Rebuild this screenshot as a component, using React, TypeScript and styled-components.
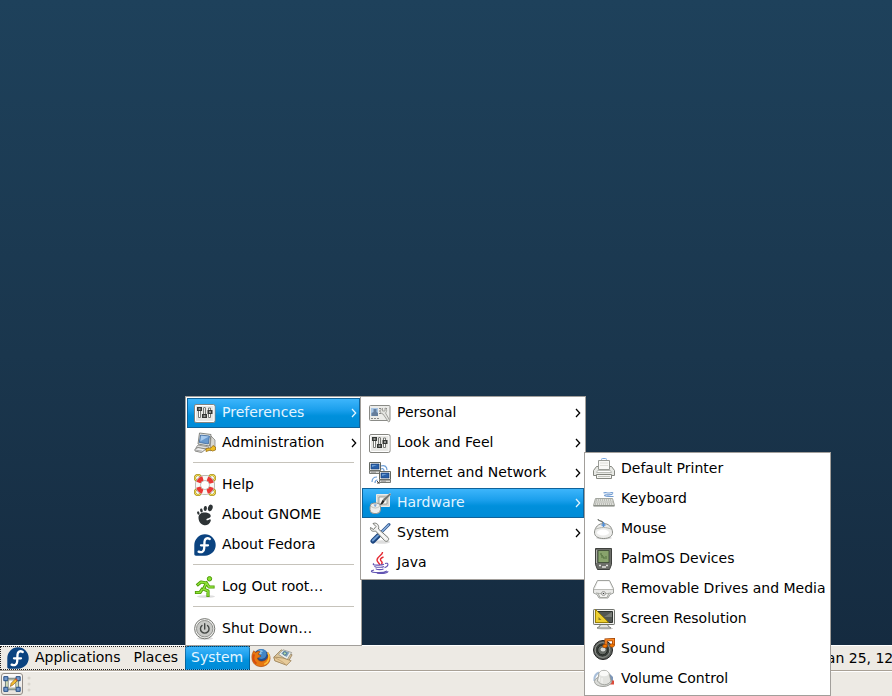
import React from "react";
import styled, { createGlobalStyle, css } from "styled-components";

const GlobalStyle = createGlobalStyle`
  * { box-sizing: border-box; }
  html, body, #root { height: 100%; margin: 0; }
  body { overflow: hidden; font: 14px/20px "DejaVu Sans", sans-serif; color: #000; }
  button { font: inherit; color: inherit; border: 0; margin: 0; padding: 0; background: none; text-align: left; }
  svg { display: block; flex: none; }
`;

const Screen = styled.div`
  position: relative;
  display: flex;
  flex-direction: column;
  height: 100%;
  overflow: hidden;
`;

const Wallpaper = styled.main`
  flex: 1;
  background: linear-gradient(#1e415b, #1a364d 55%, #152b40);
`;

const Panel = styled.div`
  display: flex;
  align-items: center;
  height: 26px;
  background: #edeae4;
  border-top: 1px solid #fff;
  border-bottom: 1px solid #a9a196;
  white-space: nowrap;
`;

const TaskPanel = styled(Panel)`
  height: 25px;
  border-bottom: 0;
  padding-left: 1px;
  gap: 4px;
`;

const MenuBar = styled.nav`
  display: flex;
  align-items: stretch;
  height: 24px;
  border: 1px dotted #222;
  border-right: 0;
`;

const blueFill = css`
  background: linear-gradient(#3db5fb, #1a9fec 40%, #0090dc 60%, #008bd7);
  color: #e2f5ff;
`;

const BarButton = styled.button<{ $active?: boolean }>`
  display: flex;
  align-items: center;
  gap: 6px;
  padding: 0 7px 0 6px;
  ${(p) =>
    p.$active &&
    css`
      ${blueFill}
      margin: -1px 0;
      border: 1px dotted #0b3c60;
      border-radius: 3px 3px 0 0;
      padding: 0 6px 0 5px;
    `}
`;

const BarLabel = styled.span`
  padding-bottom: 2px;
`;

const Launchers = styled.div`
  display: flex;
  gap: 2px;
  padding-left: 1px;
`;

const LaunchButton = styled.button`
  display: flex;
`;

const Clock = styled.time`
  margin-left: auto;
  margin-right: -6px;
`;

const DesktopButton = styled.button`
  display: flex;
  align-items: center;
  justify-content: center;
  width: 22px;
  height: 22px;
  border: 1px solid #928c86;
  border-radius: 3px;
  background: linear-gradient(#fbfaf9, #e6e2dc);
`;

const Menu = styled.div<{ $left: number; $bottom: number; $width: number }>`
  position: absolute;
  left: ${(p) => p.$left}px;
  bottom: ${(p) => p.$bottom}px;
  width: ${(p) => p.$width}px;
  padding: 1px;
  background: #fff;
  border: 1px solid #a29f9b;
`;

const MenuItem = styled.button<{ $active?: boolean }>`
  display: flex;
  align-items: center;
  gap: 6px;
  width: 100%;
  height: 30px;
  padding: 0 3px 0 7px;
  white-space: nowrap;
  ${(p) =>
    p.$active &&
    css`
      ${blueFill}
      border: 1px solid #0f639b;
      padding: 0 2px 0 6px;
    `}
`;

const ItemLabel = styled.span`
  flex: 1;
  padding-bottom: 2px;
`;

const Separator = styled.hr`
  height: 1px;
  margin: 4px 6px 7px;
  border: 0;
  background: #c6c3bb;
`;

const Svg = ({ children, size = 22 }: { children: React.ReactNode; size?: number }) => (
  <svg width={size} height={size} viewBox="0 0 22 22" fill="none" aria-hidden="true">
    {children}
  </svg>
);

const Chevron = () => (
  <svg width="6" height="10" viewBox="0 0 6 10" fill="none" stroke="currentColor" strokeWidth="1.250" aria-hidden="true">
    <path d="M1 1 L4.700 5 L1 9" />
  </svg>
);

const SlidersIcon = () => (
  <Svg>
    <rect x=".5" y="2.500" width="20.500" height="18" rx="1.500" fill="#e8e8e5" stroke="#858580" />
    <rect x="1.500" y="3.500" width="18.500" height="16" rx="1" stroke="#fff" />
    <path d="M4.500 7v8.500h2V7M9.500 6v6M11.500 6v6M14.500 10v5.500h2V10M9.500 5.500h2M14.500 8V6h2v2" fill="#fff" stroke="#6b6d69" strokeWidth=".9" />
    <path d="M3 5h5v4H3zM8 12h5v4H8zM13.500 8h5v4h-5z" fill="#343735" />
    <path d="M4.500 7h2M9.500 14h2M15 10h2" stroke="#f3f3ef" />
  </Svg>
);

const AdminIcon = () => (
  <Svg>
    <path d="M17 4l4 4v8l-5 3z" fill="#d8d8d2" stroke="#777" strokeWidth=".7" />
    <path d="M5.500 1L17 2.500 15.500 14 4 12z" fill="#eeeeea" stroke="#777974" strokeWidth=".9" />
    <path d="M6.500 3l9 1-1.200 8L5.300 10.500z" fill="#6899cf" stroke="#315b91" strokeWidth=".7" />
    <path d="M7 3.800l7.800.8-8.400 4.600z" fill="#a6c9ed" />
    <path d="M4 13l11 2-2 2.500L2 15.500z" fill="#dededb" stroke="#777" strokeWidth=".7" />
    <path d="M1 17l3-1.500 8 1.500-4.500 3.500L1 19z" fill="#eee" stroke="#8a8a86" />
    <path d="M2 18.200l6 1" stroke="#aaa" />
    <path d="M12 16.500l5-.5 2-2.500 2.500 1.500v3l-3 1-2-1-4.500 1.500z" fill="#efbd24" stroke="#9a7010" strokeWidth=".8" />
  </Svg>
);

const HelpIcon = () => (
  <Svg>
    <g stroke="#a08613" strokeWidth="2">
      <circle cx="4" cy="4" r="3" /><circle cx="18" cy="4" r="3" />
      <circle cx="4" cy="18" r="3" /><circle cx="18" cy="18" r="3" />
    </g>
    <g stroke="#f5df55">
      <circle cx="4" cy="4" r="3" /><circle cx="18" cy="4" r="3" />
      <circle cx="4" cy="18" r="3" /><circle cx="18" cy="18" r="3" />
    </g>
    <circle cx="11" cy="11" r="7" stroke="#858782" strokeWidth="6" />
    <circle cx="11" cy="11" r="7" stroke="#f7f7f4" strokeWidth="5" />
    <circle cx="11" cy="11" r="7" stroke="#ea3834" strokeWidth="4.400" strokeDasharray="6.400 4.595" strokeDashoffset="-2.300" />
  </Svg>
);

const GnomeIcon = () => (
  <Svg>
    <g fill="#2e3436">
      <ellipse cx="16.300" cy="3.900" rx="2.300" ry="3.400" transform="rotate(18 16.300 3.900)" />
      <ellipse cx="11.300" cy="4.500" rx="1.600" ry="2.400" transform="rotate(8 11.300 4.500)" />
      <ellipse cx="7.400" cy="6.500" rx="1.300" ry="2" transform="rotate(-12 7.400 6.500)" />
      <ellipse cx="4.300" cy="9" rx="1.100" ry="1.700" transform="rotate(-24 4.300 9)" />
      <path d="M10.500 8.500c4 0 6.500 1.700 6.200 3.700-.4 2.500-4.300 1.700-4.300 3.500 0 1.300 2.100.4 3-.2 1-.6 1.700.2 1.300 1.600-1 3.300-4.300 4.900-7.200 4C6 20 4.500 16.500 4.500 13.500c0-3 2.500-5 6-5z" />
    </g>
  </Svg>
);

const FedoraIcon = () => (
  <Svg>
    <path d="M11 .3A10.700 10.700 0 0 0 .3 11v9c0 1.200.6 1.700 1.700 1.700h9A10.700 10.700 0 1 0 11 .3z" fill="#0b4380" />
    <path d="M15.800 5c-2.800-1.700-5.100-.2-5.300 2.700l-.3 6.700c-.2 3.300-2.500 4.600-5.600 3.200M7 11.300h7" stroke="#fff" strokeWidth="2.300" strokeLinecap="round" />
  </Svg>
);

const RunnerIcon = () => (
  <Svg>
    <ellipse cx="12" cy="20.500" rx="9" ry="1.300" fill="#ddd" />
    <g strokeLinecap="square" strokeLinejoin="round">
      <path d="M4 8.500l3-2.500 5.500 1-3 6 4.500 2v4.500M8 13.500l-2 3H2.500M12.500 7l2.500 4h4" stroke="#4e9a06" strokeWidth="3.200" />
      <path d="M4 8.500l3-2.500 5.500 1-3 6 4.500 2v4.500M8 13.500l-2 3H2.500M12.500 7l2.500 4h4" stroke="#8ee23a" strokeWidth="1.500" />
    </g>
    <circle cx="15.500" cy="2.800" r="2.200" fill="#8ae234" stroke="#4e9a06" />
  </Svg>
);

const PowerIcon = () => (
  <Svg>
    <ellipse cx="11" cy="20.500" rx="8" ry="1.300" fill="#ddd" />
    <circle cx="10.700" cy="10.700" r="10.100" fill="#f1f1ef" stroke="#777974" />
    <circle cx="10.700" cy="10.700" r="8.200" fill="#c9cac7" stroke="#91928e" />
    <path d="M8 7.500a4.300 4.300 0 1 0 5.500 0M10.700 5.800v5.200" stroke="#444845" strokeWidth="1.400" strokeLinecap="round" />
  </Svg>
);

const PersonalIcon = () => (
  <Svg>
    <rect x=".5" y="3.500" width="20.500" height="15" rx="1" fill="#ecece9" stroke="#8a8b87" />
    <path d="M2 6h7v8H2z" fill="#a7c5e5" />
    <path d="M2.500 14v-3l2-1V7h3v3l1.500 1v3z" fill="#667e9c" />
    <path d="M10 6.500h4M16 6.500h3M10 9h3M2 16.500h5M8 16.500h3M10 11.500h4" stroke="#888" strokeDasharray="2 1" />
    <path d="M13.500 6.500c-3 1-3 5 .5 5.500l5.500 8 1.500-1-4.500-8c2-2 1-4.500-.5-5v3h-2.500z" fill="#e4e4e1" stroke="#a0a19c" />
  </Svg>
);

const Computer = () => (
  <>
    <path d="M.5.5h11v8H.5z" fill="#eeeeea" stroke="#656862" />
    <path d="M2 2h8v5H2z" fill="#2960a8" stroke="#163c78" strokeWidth=".6" />
    <path d="M3 3h5L3 5z" fill="#6c9dd3" />
    <path d="M.5 9h11v2.500H.5z" fill="#ddddda" stroke="#767974" />
    <path d="M2 10.200h5" stroke="#777" strokeWidth=".7" />
  </>
);

const NetworkIcon = () => (
  <Svg>
    <path d="M12 4c3-1 6 0 6 4M12 7c2-1 3 0 3 2M3 20c0-3 2-5 5-5M6 21c0-2 1-3 2.500-3" stroke="#6c9dd5" strokeWidth="1.200" />
    <path d="M8 19l2 2M8 21h3" stroke="#444" />
    <Computer />
    <g transform="translate(10 9)"><Computer /></g>
  </Svg>
);

const HardwareIcon = () => (
  <Svg>
    <path d="M7.500 2.500h13v12h-13z" fill="#d3d4d0" stroke="#ecece8" />
    <path d="M10 5h8v7h-8z" fill="#f7f7f4" stroke="#82857f" strokeWidth=".7" />
    <path d="M13 11l1-4 7-6 1 1.500L16 9z" fill="#6d706b" stroke="#ddd" strokeWidth=".5" />
    <path d="M11 13l2.500-5 2 1.500-2 2.500z" fill="#222" />
    <rect x="1" y="11" width="10.500" height="10.500" rx="4" fill="#ededeb" stroke="#92948f" />
    <path d="M2 14.500c3 2 6 2 8.500 0M6.200 11v4" stroke="#b5b7b2" strokeWidth=".8" />
    <path d="M4.500 12.500h3.500L6.200 15z" fill="#77a8df" />
  </Svg>
);

const ToolsIcon = () => (
  <Svg>
    <ellipse cx="13" cy="20" rx="8" ry="1.700" fill="#ddd" />
    <path d="M20 2.500L11.500 11" stroke="#345b91" strokeWidth="3" strokeLinecap="round" />
    <path d="M20 2.500L11.500 11" stroke="#90b5e2" strokeWidth="1.300" />
    <path d="M9.500 13.500L4 19" stroke="#1b447e" strokeWidth="5" strokeLinecap="round" />
    <path d="M9 13.500L3.800 18.500" stroke="#6d9bd0" strokeWidth="2" strokeLinecap="round" />
    <path d="M4 1.500l3 3-2.500 3-3-2C1 8.500 3.500 10 6.500 9l9 9.500c2.500 2.500 5.500-1 3.500-3L9.500 7c1-3.500-1.500-7-5.500-5.500z" fill="#f1f1ef" stroke="#777974" />
    <path d="M8 8l9 9" stroke="#fff" />
  </Svg>
);

const JavaIcon = () => (
  <Svg>
    <path d="M13.500 0c.5 3-5.500 4.500-5.500 8 0 2 2.500 3 3 5M14.500 5c-3 1-4 2.500-2 4.500 1 1 .7 2-.2 3" stroke="#e52831" strokeWidth="1.400" />
    <path d="M5 11.500c-4 2 8 2 10 .8M6 14c-1.500 1.800 8 1.600 9 .3M7 16.500c0 1.600 6.500 1.400 7.500.3M16 11.500c4-1.500 4 3-.5 4.200M5 18c-9 2.300 8 4 13 1M8 21.300c6 .6 11-.5 11-2" stroke="#6254b3" strokeWidth="1.100" />
  </Svg>
);

const PrinterIcon = () => (
  <Svg>
    <path d="M8 1.500c1-1.500 5-1.500 6 0" stroke="#78a7df" />
    <path d="M3.500 8.500h15l3 4v5H.5v-5z" fill="#e8e9e5" stroke="#858780" />
    <path d="M5.500 2.500h11v9h-11z" fill="#f8f8f6" stroke="#999b96" />
    <path d="M7 5h8M7 7.500h8" stroke="#deded9" />
    <path d="M4.500 12.500h13l1 2h-15z" fill="#fff" stroke="#bbbdb7" />
    <path d="M3.500 16.500h15v4h-15z" fill="#f5f5f2" stroke="#858780" />
    <path d="M5 18.500h12" stroke="#c3c5be" />
  </Svg>
);

const KeyboardIcon = () => (
  <Svg>
    <path d="M10.500 5c1.500-1 3 0 5 0s4-1 4.500 0M20 5.500c-2 3-8 0-8.500 2 0 1 6 1 9 1" stroke="#709bd1" strokeWidth="1.100" />
    <path d="M2.500 10.500h17l2 7H.5z" fill="#ddded9" stroke="#a3a69f" />
    <path d="M3 12h16M2.500 14h17M2 16h18" stroke="#9a9d96" strokeDasharray="1 1" />
    <path d="M.5 18h21" stroke="#777a73" />
  </Svg>
);

const MouseIcon = () => (
  <Svg>
    <path d="M5 1c0 3 5 .5 5.500 5" stroke="#6f736d" strokeWidth="1.200" />
    <ellipse cx="11" cy="20" rx="8" ry="1.500" fill="#ddd" />
    <path d="M10.500 5.500C5.500 5.500 2 9 1.500 14c-.3 4 3 6.500 9 6.500s9.300-2.500 9-6.500c-.5-5-4-8.500-9-8.500z" fill="#ececea" stroke="#8b8d88" />
    <path d="M3 11c5-2 10-2 15 0" stroke="#b2b4ae" />
    <path d="M10.500 4v5M8.500 7h4" stroke="#518ed5" strokeWidth="1.400" />
    <ellipse cx="10" cy="14.500" rx="6" ry="3" fill="#fff" />
  </Svg>
);

const PalmIcon = () => (
  <Svg>
    <path d="M2.500.5h16v16l-2 5h-12l-2-5z" fill="#6c6e69" stroke="#3e403d" />
    <path d="M5 2.500h11v12H5z" fill="#88a36c" stroke="#394632" strokeWidth=".8" />
    <path d="M8 5v2l2 1M8 9h3v2M13 8v3" stroke="#52703e" />
    <path d="M6 17.500h2M13 17.500h2M9 19h4" stroke="#e5e5e1" strokeWidth="1.500" />
    <path d="M3.500 2v13" stroke="#b0b2aa" />
  </Svg>
);

const DriveIcon = () => (
  <Svg>
    <path d="M4.500 2.500h12l4 8v4.500l-3.500 1.500-2 3.500H6l-2-3.500-3.500-1.500v-4.500z" fill="#e9e9e7" stroke="#a1a39f" />
    <path d="M5 3.500h11l3 7.500H2z" fill="#fff" />
    <path d="M1 11.500h19" stroke="#bbbcb8" />
    <path d="M3 15c5 1 10 1 15 0M5 15l2 4.500h7l2-4.500" fill="#f4f4f2" stroke="#a6a8a2" />
    <circle cx="10.500" cy="15.500" r="2" fill="#fff" stroke="#999b96" />
    <circle cx="10.500" cy="15.500" r=".8" fill="#333" />
  </Svg>
);

const ScreenIcon = () => (
  <Svg>
    <ellipse cx="12" cy="20.500" rx="8" ry="1" fill="#ccc" />
    <path d="M7 16h8v2l3 2H4l3-2z" fill="#e4e4e0" stroke="#858780" />
    <rect x=".5" y="1.500" width="21" height="15" rx=".7" fill="#eeeeeb" stroke="#70736e" />
    <path d="M2.500 3.500h17v11h-17z" fill="#535753" stroke="#303430" />
    <path d="M11 9l8-5v5z" fill="#777b76" />
    <path d="M2.500 1.500v13h13z" fill="#edcf31" stroke="#9c8206" />
    <path d="M5.500 9v3h3z" fill="#8a7b20" />
  </Svg>
);

const SoundIcon = () => (
  <Svg>
    <circle cx="10" cy="12" r="9.500" fill="#5d615d" stroke="#222" />
    <circle cx="9.500" cy="12" r="7.300" fill="#383d39" stroke="#a2a5a0" strokeWidth=".8" />
    <circle cx="9.500" cy="12" r="4.800" fill="#656a65" stroke="#242924" />
    <ellipse cx="10" cy="11.500" rx="2.500" ry="2" fill="#d6d8d5" />
    <path d="M13 8V2l7.500-.5v6" stroke="#9c4204" strokeWidth="3" />
    <path d="M13 8V2l7.500-.5v6" stroke="#ff8a24" strokeWidth="1.500" />
    <ellipse cx="12" cy="8" rx="2.300" ry="1.700" fill="#f57900" stroke="#9c4204" strokeWidth=".7" />
    <ellipse cx="19" cy="7.500" rx="2.300" ry="1.700" fill="#f57900" stroke="#9c4204" strokeWidth=".7" />
  </Svg>
);

const VolumeIcon = () => (
  <Svg>
    <path d="M1.500 13c-.5-4 1-7 4.500-8.500" stroke="#a9bfd9" strokeWidth="2" />
    <path d="M17 6l3 3v4h-3z" fill="#7c96b9" />
    <path d="M17.500 12.500h3.500v4h-4z" fill="#dd4c3b" />
    <ellipse cx="10" cy="13.500" rx="8.500" ry="5" fill="#dadbd8" stroke="#a0a29d" />
    <path d="M6 5c2-3.500 8-3.500 10 0l2 8c-3 5-10 5-13.500 0z" fill="#e2e3df" stroke="#92948e" strokeWidth=".8" />
    <ellipse cx="11" cy="5.500" rx="4.500" ry="2.700" fill="#fafaf8" />
    <path d="M6.500 9l-.5 4M9 10v5" stroke="#f9f9f7" />
  </Svg>
);

const FirefoxIcon = () => (
  <Svg size={20}>
    <circle cx="11" cy="10.500" r="9" fill="#214f91" />
    <circle cx="11.500" cy="6.500" r="5.500" fill="#4386c4" />
    <path d="M9 3c2-1 4-.5 4 1l-2 1 1 1.500-3 .5z" fill="#8bc3e8" />
    <path d="M3 3l2 2c2-1.500 4-1.500 5-1L8 6.500c0 1.500 3 1 3 2.500-1.500 0-2 2-4 2 1 5 8 4.500 11 0 1-2 1-4 .5-6C23 9 22 20 11 20.500 4 20.500.5 15 1 9c0-2 1-4 2-6z" fill="#e77812" stroke="#9d3c05" strokeWidth=".6" />
    <path d="M18.500 5c3 5 1 11-4 13" stroke="#ffc038" strokeWidth="1.700" />
    <path d="M3.500 7c-1.500 4-.5 8 2.500 10" stroke="#d84a0c" strokeWidth="2" />
  </Svg>
);

const MailIcon = () => (
  <Svg size={20}>
    <path d="M1 10l8-8 12 5.500-6 11L2 14z" fill="#dcc498" stroke="#8d7651" strokeWidth=".8" />
    <path d="M6 7l5-5 9.500 3-5 8z" fill="#eceee9" stroke="#8b8d85" strokeWidth=".8" />
    <path d="M9 6l3-3 6 2-3 5z" fill="#7b9fbe" />
    <circle cx="13" cy="6" r="1.800" fill="#b7dca8" stroke="#47708b" />
    <path d="M1 10l10 1 9 3-5 5-13-5z" fill="#e7cb9a" stroke="#9a8056" strokeWidth=".8" />
    <path d="M1 10l9 5 5 4" stroke="#bd9c6b" strokeWidth=".8" />
  </Svg>
);

const DesktopIcon = () => (
  <Svg size={18}>
    <path d="M3 4h16v14H3z" fill="#d0dab8" stroke="#596c70" />
    <path d="M1 2h5v5H1zM16 2h5v5h-5zM1 15h5v5H1zM16 15h5v5h-5z" fill="#7399cb" stroke="#234c83" strokeWidth="1.200" />
    <path d="M6.500 6h9v10h-9z" fill="#fff" stroke="#848982" />
    <path d="M9 14l1-4 5-5 2.500 2-5 5z" fill="#f1bd32" stroke="#8c5819" strokeWidth=".8" />
    <path d="M15.500 4.500l2 2" stroke="#df4c31" strokeWidth="1.500" />
  </Svg>
);

const HandleDots = () => (
  <svg width="4" height="16" viewBox="0 0 4 16" fill="#d9d5cd" aria-hidden="true">
    <circle cx="2" cy="2" r="1.500" />
    <circle cx="2" cy="8" r="1.500" />
    <circle cx="2" cy="14" r="1.500" />
  </svg>
);

type Entry = { label: string; icon: React.ReactNode; submenu?: boolean; active?: boolean } | "separator";

const systemMenu: Entry[] = [
  { label: "Preferences", icon: <SlidersIcon />, submenu: true, active: true },
  { label: "Administration", icon: <AdminIcon />, submenu: true },
  "separator",
  { label: "Help", icon: <HelpIcon /> },
  { label: "About GNOME", icon: <GnomeIcon /> },
  { label: "About Fedora", icon: <FedoraIcon /> },
  "separator",
  { label: "Log Out root…", icon: <RunnerIcon /> },
  "separator",
  { label: "Shut Down…", icon: <PowerIcon /> },
];

const preferencesMenu: Entry[] = [
  { label: "Personal", icon: <PersonalIcon />, submenu: true },
  { label: "Look and Feel", icon: <SlidersIcon />, submenu: true },
  { label: "Internet and Network", icon: <NetworkIcon />, submenu: true },
  { label: "Hardware", icon: <HardwareIcon />, submenu: true, active: true },
  { label: "System", icon: <ToolsIcon />, submenu: true },
  { label: "Java", icon: <JavaIcon /> },
];

const hardwareMenu: Entry[] = [
  { label: "Default Printer", icon: <PrinterIcon /> },
  { label: "Keyboard", icon: <KeyboardIcon /> },
  { label: "Mouse", icon: <MouseIcon /> },
  { label: "PalmOS Devices", icon: <PalmIcon /> },
  { label: "Removable Drives and Media", icon: <DriveIcon /> },
  { label: "Screen Resolution", icon: <ScreenIcon /> },
  { label: "Sound", icon: <SoundIcon /> },
  { label: "Volume Control", icon: <VolumeIcon /> },
];

function PopupMenu({ name, entries, left, bottom, width }: {
  name: string;
  entries: Entry[];
  left: number;
  bottom: number;
  width: number;
}) {
  return (
    <Menu role="menu" aria-label={name} $left={left} $bottom={bottom} $width={width}>
      {entries.map((entry, i) =>
        entry === "separator" ? (
          <Separator key={i} />
        ) : (
          <MenuItem key={i} role="menuitem" $active={entry.active} aria-haspopup={entry.submenu ? "menu" : undefined}>
            {entry.icon}
            <ItemLabel>{entry.label}</ItemLabel>
            {entry.submenu && <Chevron />}
          </MenuItem>
        )
      )}
    </Menu>
  );
}

export default function App() {
  return (
    <>
      <GlobalStyle />
      <Screen>
        <Wallpaper />
        <Panel>
          <MenuBar>
            <BarButton><FedoraIcon /><BarLabel>Applications</BarLabel></BarButton>
            <BarButton><BarLabel>Places</BarLabel></BarButton>
            <BarButton $active><BarLabel>System</BarLabel></BarButton>
          </MenuBar>
          <Launchers>
            <LaunchButton aria-label="Firefox"><FirefoxIcon /></LaunchButton>
            <LaunchButton aria-label="Mail"><MailIcon /></LaunchButton>
          </Launchers>
          <Clock>Jan 25, 12:</Clock>
        </Panel>
        <TaskPanel>
          <DesktopButton aria-label="Show desktop"><DesktopIcon /></DesktopButton>
          <HandleDots />
        </TaskPanel>
        <PopupMenu name="System" entries={systemMenu} left={185} bottom={50} width={177} />
        <PopupMenu name="Preferences" entries={preferencesMenu} left={360} bottom={116} width={226} />
        <PopupMenu name="Hardware" entries={hardwareMenu} left={584} bottom={0} width={247} />
      </Screen>
    </>
  );
}
